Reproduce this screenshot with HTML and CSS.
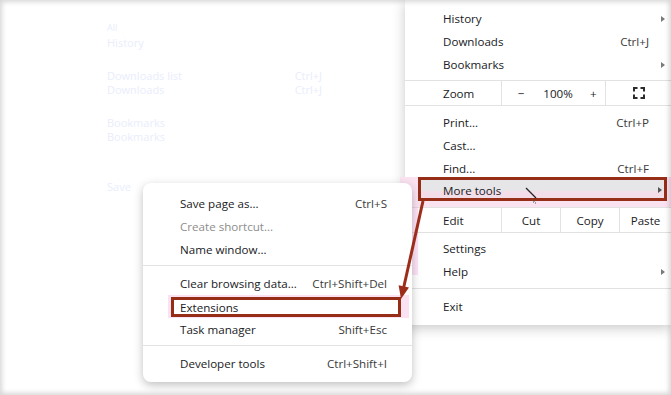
FILE: index.html
```html
<!DOCTYPE html>
<html lang="en">
<head>
    <meta charset="UTF-8">
    <title>Chrome menu - More tools</title>
    <link rel="stylesheet" href="styles.css">
</head>
<body>
    <div class="screen">

        <!-- faded page behind the menus -->
        <div class="ghost">
            <div class="g-small">All</div>
            <div class="g-line">History</div>
            <div class="g-pair gap1"><span>Downloads list</span><span>Ctrl+J</span></div>
            <div class="g-pair"><span>Downloads</span><span>Ctrl+J</span></div>
            <div class="g-pair gap1"><span>Bookmarks</span></div>
            <div class="g-pair"><span>Bookmarks</span></div>
            <div class="g-pair gap2"><span>Save</span></div>
        </div>

        <!-- main chrome menu -->
        <div class="menu main-menu">
            <div class="row"><span class="label">History</span><span class="tail"><i class="arrow"></i></span></div>
            <div class="row"><span class="label">Downloads</span><span class="key">Ctrl+J</span><span class="tail"></span></div>
            <div class="row"><span class="label">Bookmarks</span><span class="tail"><i class="arrow"></i></span></div>
            <div class="sep first"></div>
            <div class="split">
                <div class="cell name">Zoom</div>
                <div class="cell zoomctl">
                    <span>&minus;</span>
                    <span>100%</span>
                    <span class="plus">+</span>
                </div>
                <div class="cell full">
                    <svg width="12" height="12" viewBox="0 0 12 12">
                        <path d="M1 4.5V1h3.5M7.5 1H11v3.5M11 7.5V11H7.5M4.5 11H1V7.5" fill="none" stroke="#2b2b2b" stroke-width="2"/>
                    </svg>
                </div>
            </div>
            <div class="sep after"></div>
            <div class="row"><span class="label">Print...</span><span class="key">Ctrl+P</span><span class="tail"></span></div>
            <div class="row"><span class="label">Cast...</span><span class="tail"></span></div>
            <div class="row"><span class="label">Find...</span><span class="key">Ctrl+F</span><span class="tail"></span></div>
            <div class="hl-more">
                <div class="more-box">
                    <span class="label">More tools</span><span class="tail"><i class="arrow dark"></i></span>
                </div>
            </div>
            <div class="sep"></div>
            <div class="split">
                <div class="cell name">Edit</div>
                <div class="cell mid">Cut</div>
                <div class="cell mid">Copy</div>
                <div class="cell last">Paste</div>
            </div>
            <div class="sep after-edit"></div>
            <div class="row"><span class="label">Settings</span><span class="tail"></span></div>
            <div class="row"><span class="label">Help</span><span class="tail"><i class="arrow"></i></span></div>
            <div class="sep gap-exit"></div>
            <div class="row"><span class="label">Exit</span><span class="tail"></span></div>
        </div>

        <div class="tint"></div>

        <!-- more tools submenu -->
        <div class="menu sub-menu">
            <div class="row"><span class="label">Save page as...</span><span class="key">Ctrl+S</span></div>
            <div class="row off"><span class="label">Create shortcut...</span></div>
            <div class="row"><span class="label">Name window...</span></div>
            <div class="sep sub-sep"></div>
            <div class="row"><span class="label">Clear browsing data...</span><span class="key">Ctrl+Shift+Del</span></div>
            <div class="hl-ext">
                <div class="ext-box">Extensions</div>
            </div>
            <div class="row"><span class="label">Task manager</span><span class="key">Shift+Esc</span></div>
            <div class="sep sub-sep"></div>
            <div class="row"><span class="label">Developer tools</span><span class="key">Ctrl+Shift+I</span></div>
        </div>

        <!-- annotation arrow and mouse pointer -->
        <svg class="marks" width="671" height="395" viewBox="0 0 671 395">
            <line x1="423" y1="201" x2="403.8" y2="287" stroke="#9b2d1a" stroke-width="3"/>
            <polygon points="401,299 398.6,285.2 409,287.6" fill="#9b2d1a"/>
            <line x1="526" y1="188" x2="536" y2="198" stroke="#222" stroke-width="1.2"/>
            <path d="M532 200h1M534 201h1M533 202h1M535 203h1" stroke="#555" stroke-width="1"/>
        </svg>

        <div class="frame"></div>
    </div>
</body>
</html>
```

FILE: styles.css
```css
body {
    margin: 0;
    background: #ffffff;
    font-family: "Open Sans", "Noto Sans", sans-serif;
    font-size: 11.6px;
    color: #202124;
}

.screen {
    position: relative;
    width: 671px;
    height: 395px;
    overflow: hidden;
    background: #ffffff;
}

/* faded page content */
.ghost {
    padding: 21px 0 0 107px;
    color: #e9edfc;
    font-size: 11px;
    line-height: 14px;
}
.g-small {
    font-size: 9px;
}
.g-line {
    margin-top: 1px;
}
.g-pair {
    display: flex;
    width: 215px;
    justify-content: space-between;
}
.gap1 {
    margin-top: 19px;
}
.gap2 {
    margin-top: 36px;
}

/* menus */
.menu {
    position: absolute;
    background: #ffffff;
}

.main-menu {
    top: 0;
    left: 405px;
    width: 266px;
    padding: 7px 0 7px 0;
    box-shadow: 0 3px 12px rgba(0, 0, 0, 0.22);
}

.sub-menu {
    top: 183px;
    left: 143px;
    width: 269px;
    padding: 9px 0 7px 0;
    border-radius: 8px;
    box-shadow: 0 3px 10px rgba(0, 0, 0, 0.25);
    z-index: 2;
}

.row {
    display: flex;
    align-items: center;
    height: 23px;
    padding-left: 38px;
}
.row .label {
    flex: 1;
}
.key {
    color: #3a3a3a;
}
.tail {
    width: 22px;
    height: 100%;
    display: flex;
    align-items: center;
    justify-content: flex-end;
    padding-right: 6px;
    box-sizing: border-box;
}
.arrow {
    width: 0;
    height: 0;
    border-left: 4px solid #7a7a7a;
    border-top: 3.5px solid transparent;
    border-bottom: 3.5px solid transparent;
}
.arrow.dark {
    border-left-color: #555555;
}

.sep {
    height: 1px;
    background: #e2e2e2;
}
.sep.first {
    margin-top: 4px;
}
.sep.after {
    margin-bottom: 5px;
}
.sep.after-edit {
    margin-bottom: 4px;
}
.sep.gap-exit {
    margin: 5px 0 6px 0;
}

/* zoom / edit rows */
.split {
    display: flex;
    height: 24px;
}
.cell {
    display: flex;
    align-items: center;
    justify-content: center;
    border-left: 1px solid #e2e2e2;
}
.cell.name {
    width: 96px;
    padding-left: 38px;
    box-sizing: border-box;
    justify-content: flex-start;
    border-left: none;
}
.cell.zoomctl {
    width: 103px;
    display: grid;
    grid-template-columns: 38px 36px 1fr;
    align-items: center;
    text-align: center;
}
.cell.zoomctl .plus {
    text-align: left;
    padding-left: 14px;
}
.cell.full {
    flex: 1;
}
.cell.mid {
    width: 58px;
}
.cell.last {
    flex: 1;
}

/* highlighted "More tools" */
.hl-more {
    margin-top: -3px;
    margin-left: -5px;
    padding: 0 4px 6px 18px;
    background: #fbe2f1;
}
.more-box {
    display: flex;
    align-items: center;
    height: 24px;
    box-sizing: border-box;
    padding: 2px 0 0 22px;
    border: 3px solid #952d17;
    background: linear-gradient(#e6e6e8 0, #e6e6e8 62%, #f3dde9 62%);
}
.more-box .label {
    flex: 1;
}
.more-box .tail {
    width: 18px;
    padding-right: 2px;
}

.tint {
    position: absolute;
    left: 400px;
    top: 207px;
    width: 18px;
    height: 68px;
    background: rgba(250, 175, 228, 0.35);
    z-index: 1;
}

/* submenu rows */
.sub-menu .row {
    padding-left: 37px;
    padding-right: 25px;
}
.row.off .label {
    color: #8d8d8d;
}
.sub-sep {
    margin: 4px 0 6px 0;
}
.hl-ext {
    height: 23px;
    margin: 0 3px 0 25px;
    padding: 2px 8px 1px 3px;
    box-sizing: border-box;
    background: #fbe2f3;
    display: flex;
}
.ext-box {
    flex: 1;
    display: flex;
    align-items: center;
    padding-left: 6px;
    border: 3px solid #952d17;
    background: #ffffff;
}

.marks {
    position: absolute;
    top: 0;
    left: 0;
    z-index: 3;
}

.frame {
    position: absolute;
    top: 0;
    left: 0;
    right: 0;
    bottom: 0;
    box-shadow: inset 0 0 5px 2px rgba(0, 0, 0, 0.16);
    z-index: 4;
}
```
